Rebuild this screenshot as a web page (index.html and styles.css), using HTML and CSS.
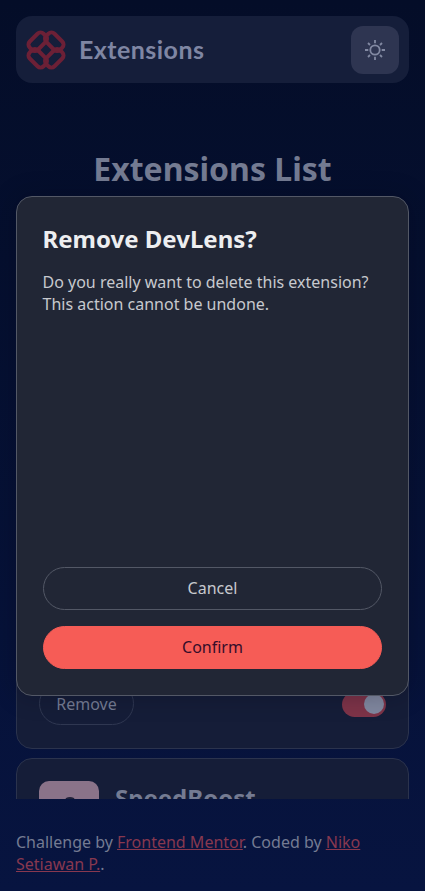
FILE: index.html
```html
<!DOCTYPE html>
<html lang="en">
<head>
<meta charset="utf-8">
<meta name="viewport" content="width=device-width, initial-scale=1">
<title>Extensions</title>
<link rel="stylesheet" href="styles.css">
</head>
<body>
<div class="page">
  <header class="header">
    <div class="brand">
      <svg class="mark" viewBox="-20 -20 40 40" fill="none" stroke="currentColor" stroke-width="4">
        <rect x="-9.8" y="-17.5" width="19.6" height="11.6" rx="4.3" transform="rotate(-45)"/>
        <rect x="-9.8" y="-17.5" width="19.6" height="11.6" rx="4.3" transform="rotate(45)"/>
        <rect x="-9.8" y="-17.5" width="19.6" height="11.6" rx="4.3" transform="rotate(135)"/>
        <rect x="-9.8" y="-17.5" width="19.6" height="11.6" rx="4.3" transform="rotate(225)"/>
      </svg>
      <svg class="wordmark" viewBox="0 0 126 34"><text x="0" y="25.5" textLength="125">Extensions</text></svg>
    </div>
    <button class="theme" aria-label="Theme">
      <svg viewBox="-11 -11 22 22" fill="none" stroke="currentColor" stroke-width="1.8">
        <circle r="4.7"/>
        <path d="M0-10v3.3M0 6.7V10M-10 0h3.3M6.7 0H10M-7-7l2 2M5 5l2 2M-7 7l2-2M5-5l2-2"/>
      </svg>
    </button>
  </header>
  <main class="list">
    <h1>Extensions List</h1>
    <article class="card">
      <div class="actions">
        <button class="remove">Remove</button>
        <span class="toggle"></span>
      </div>
    </article>
    <article class="card">
      <div class="intro">
        <div class="icon"><svg viewBox="0 0 60 60"><path d="M27 17q4-2 8 0l5 12H22z"/></svg></div>
        <h2>SpeedBoost</h2>
      </div>
    </article>
  </main>
  <footer>Challenge by <a>Frontend Mentor</a>. Coded by <a>Niko Setiawan P.</a>.</footer>
</div>
<div class="modal" role="dialog">
  <h2>Remove DevLens?</h2>
  <p>Do you really want to delete this extension? This action cannot be undone.</p>
  <div class="buttons">
    <button class="cancel">Cancel</button>
    <button class="confirm">Confirm</button>
  </div>
</div>
</body>
</html>
```
FILE: styles.css
```css
* { box-sizing: border-box; }
body, h1, h2, p { margin: 0; }
body, button { font-family: "Noto Sans", sans-serif; font-size: 16px; }
body { overflow: hidden; color: #747b92; line-height: 22px; }
button { padding: 0 0 2px; background: none; color: inherit; }
.page {
  height: 891px;
  display: flex;
  flex-direction: column;
  padding: 16px;
  background: linear-gradient(#040d28, #071440);
}
.header {
  flex: none;
  height: 67px;
  display: flex;
  align-items: center;
  justify-content: space-between;
  padding: 0 10px;
  border-radius: 16px;
  background: #151e3a;
}
.brand { display: flex; align-items: center; gap: 13px; }
.mark { width: 40px; height: 40px; color: #6c2036; }
.wordmark { width: 126px; height: 34px; }
.wordmark text { font: 700 25px Lato, sans-serif; fill: #7f86a3; }
.theme {
  display: grid;
  place-items: center;
  width: 48px;
  height: 48px;
  padding: 0;
  border: 0;
  border-radius: 12px;
  background: #2e3551;
  color: #8289a2;
}
.theme svg { width: 22px; height: 22px; }
.list { flex: none; height: 716px; overflow: hidden; }
.list h1 { margin: 61px 0 356px; height: 49px; font-size: 32px; line-height: 49px; text-align: center; }
.card {
  height: 200px;
  margin-bottom: 9px;
  padding: 22px;
  display: flex;
  flex-direction: column;
  border: 1px solid #2b334d;
  border-radius: 16px;
  background: #151d38;
}
.actions { display: flex; align-items: center; justify-content: space-between; margin-top: auto; padding-bottom: 1px; }
.remove { width: 95px; height: 43px; padding: 0; border: 1px solid #2f3751; border-radius: 22px; }
.toggle { width: 44px; height: 25px; margin-top: 2px; padding: 2px; border-radius: 13px; background: #7d3348; }
.toggle::after { content: ""; display: block; width: 20px; height: 20px; margin-left: auto; border-radius: 50%; background: #80879f; }
.intro { display: flex; gap: 16px; }
.icon { width: 60px; height: 60px; border-radius: 10px; background: #8a7389; }
.icon path { fill: #202139; }
.intro h2 { font-size: 24px; line-height: 33px; }
footer { padding-top: 32px; }
footer a { color: #88384f; text-decoration: underline; }
.modal {
  position: absolute;
  top: 196px;
  left: 16px;
  width: 393px;
  height: 500px;
  padding: 25px 26px 26px 25.5px;
  display: flex;
  flex-direction: column;
  border: 1px solid #535866;
  border-radius: 16px;
  background: #212635;
  color: #c7c9ce;
  box-shadow: 0 0 24px rgba(0, 3, 20, .25);
}
.modal h2 { margin-bottom: 16px; font-size: 24px; line-height: 33px; color: #edeef0; }
.buttons { display: grid; gap: 16px; margin: auto 0 0 .5px; }
.buttons button { height: 43px; border: 1px solid #535866; border-radius: 22px; }
.buttons .confirm { border-color: #f65c56; background: #f65c56; color: #350d2a; }
```
